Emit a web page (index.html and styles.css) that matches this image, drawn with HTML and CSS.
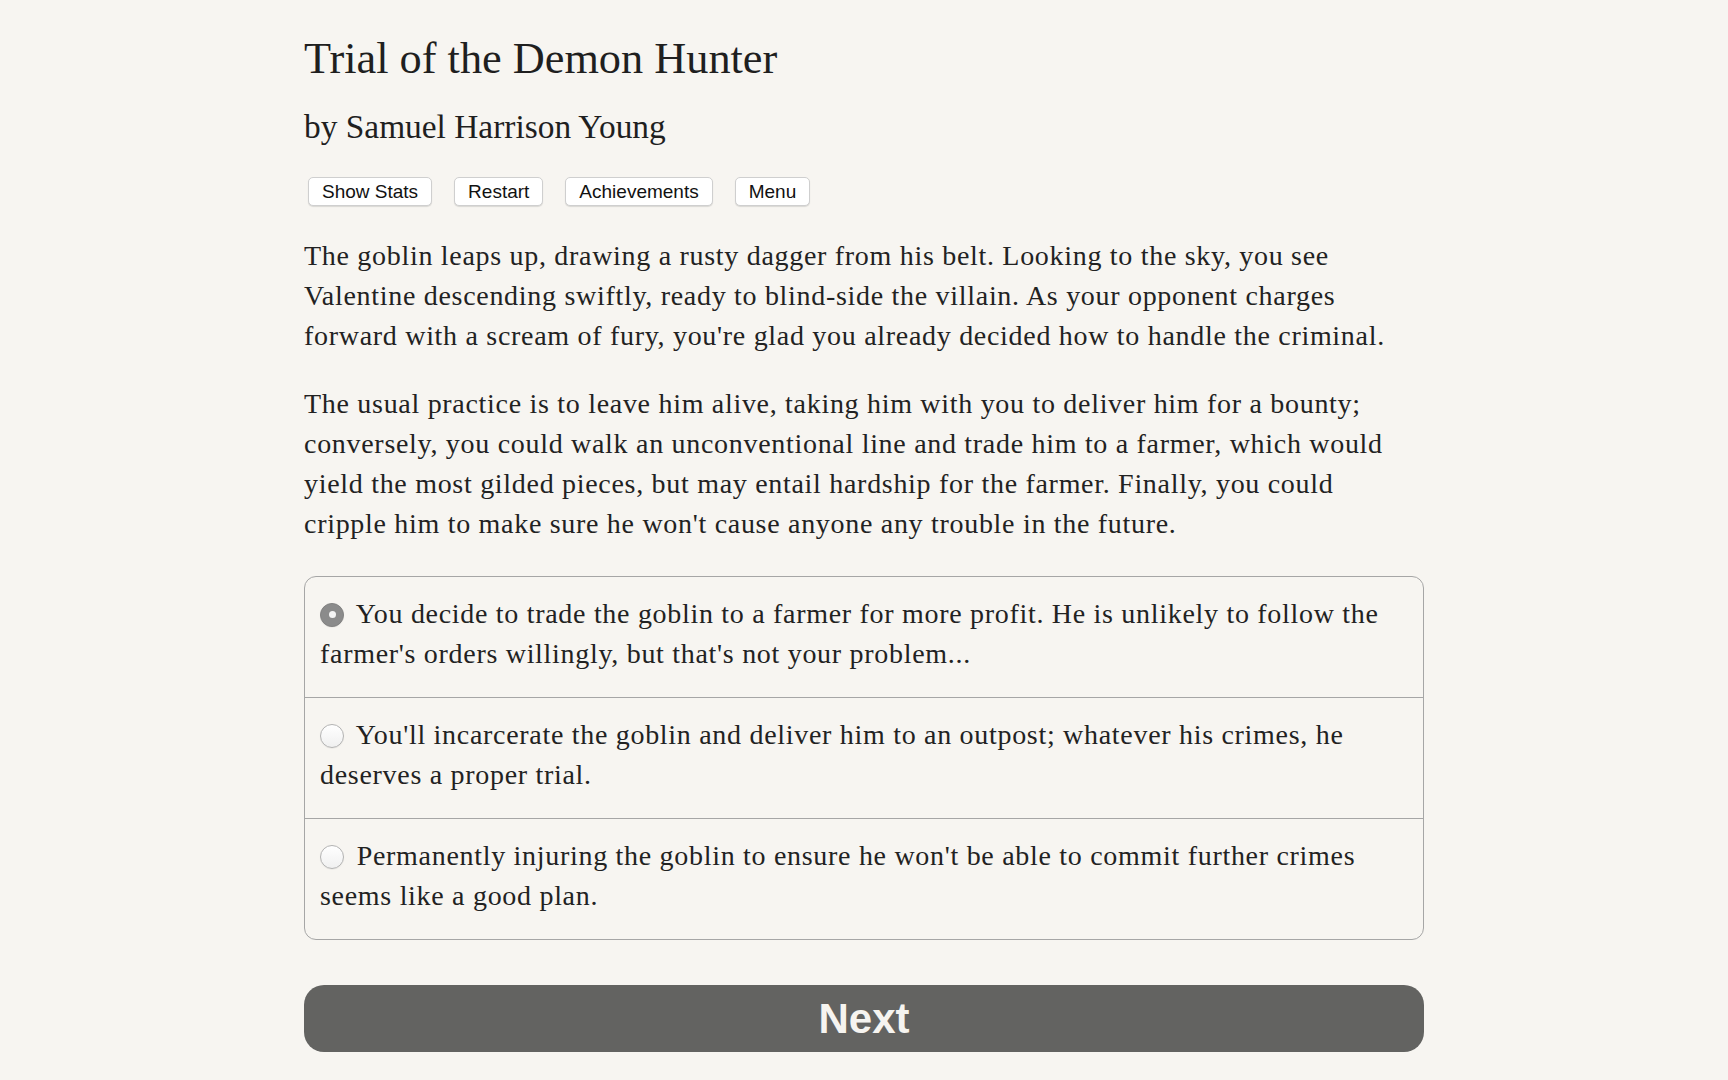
FILE: index.html
```html
<!DOCTYPE html>
<html lang="en">
<head>
<meta charset="utf-8">
<title>Trial of the Demon Hunter</title>
<link rel="stylesheet" href="styles.css">
</head>
<body>
<main class="page">
  <h1 class="title">Trial of the Demon Hunter</h1>
  <h2 class="author">by Samuel Harrison Young</h2>
  <div class="toolbar">
    <button class="tool-btn">Show Stats</button>
    <button class="tool-btn">Restart</button>
    <button class="tool-btn">Achievements</button>
    <button class="tool-btn">Menu</button>
  </div>
  <p class="story">The goblin leaps up, drawing a rusty dagger from his belt. Looking to the sky, you see Valentine descending swiftly, ready to blind-side the villain. As your opponent charges forward with a scream of fury, you're glad you already decided how to handle the criminal.</p>
  <p class="story">The usual practice is to leave him alive, taking him with you to deliver him for a bounty; conversely, you could walk an unconventional line and trade him to a farmer, which would yield the most gilded pieces, but may entail hardship for the farmer. Finally, you could cripple him to make sure he won't cause anyone any trouble in the future.</p>
  <div class="choices">
    <div class="choice"><span class="radio checked"></span> You decide to trade the goblin to a farmer for more profit. He is unlikely to follow the farmer's orders willingly, but that's not your problem...</div>
    <div class="choice"><span class="radio"></span> You'll incarcerate the goblin and deliver him to an outpost; whatever his crimes, he deserves a proper trial.</div>
    <div class="choice"><span class="radio"></span> Permanently injuring the goblin to ensure he won't be able to commit further crimes seems like a good plan.</div>
  </div>
  <button class="next-btn">Next</button>
</main>
</body>
</html>
```
FILE: styles.css
```css
html, body {
  margin: 0;
  padding: 0;
  background: #f7f5f1;
}

body {
  color: #222;
  font-family: "Liberation Serif", "Times New Roman", serif;
}

.page {
  width: 1120px;
  margin: 0 auto;
  padding-top: 33px;
  display: flex;
  flex-direction: column;
}

.title {
  margin: 0;
  font-size: 44.3px;
  line-height: 52px;
  font-weight: normal;
  color: #1f1f1f;
}

.author {
  margin: 22px 0 0;
  font-size: 33.4px;
  line-height: 40px;
  font-weight: normal;
  color: #1f1f1f;
}

.toolbar {
  margin: 30px 0 0;
  padding-left: 4px;
  display: flex;
  gap: 22px;
}

.tool-btn {
  font-family: "Liberation Sans", Arial, sans-serif;
  font-size: 19px;
  line-height: 21px;
  height: 29px;
  padding: 3px 13px;
  color: #111;
  background: #fff;
  border: 1px solid #cfcfcf;
  border-radius: 5px;
  box-shadow: 0 1px 1px rgba(0, 0, 0, 0.12);
}

.story {
  margin: 30px 0 0;
  max-width: 1100px;
  font-size: 28px;
  line-height: 40px;
  letter-spacing: 0.7px;
}

.story + .story {
  margin-top: 28px;
}

.choices {
  margin-top: 32px;
  border: 1px solid #a6a6a6;
  border-radius: 12px;
  display: flex;
  flex-direction: column;
}

.choice {
  padding: 17px 15px 23px;
  font-size: 28px;
  line-height: 40px;
  letter-spacing: 0.7px;
  min-height: 80px;
}

.choice + .choice {
  border-top: 1px solid #a6a6a6;
}

.radio {
  display: inline-block;
  box-sizing: border-box;
  width: 24px;
  height: 24px;
  border-radius: 50%;
  border: 1px solid #b3b3b3;
  background: linear-gradient(#ffffff, #f0f0f0);
  box-shadow: 0 0.5px 1px rgba(0, 0, 0, 0.08);
  vertical-align: middle;
  margin: -4px 5px 0 0;
  position: relative;
}

.radio.checked {
  background: #8b8b8b;
  border-color: #828282;
}

.radio.checked::after {
  content: "";
  position: absolute;
  left: 50%;
  top: 50%;
  width: 7px;
  height: 7px;
  margin: -3.5px 0 0 -3.5px;
  border-radius: 50%;
  background: #f4f4f4;
}

.next-btn {
  margin-top: 45px;
  height: 67px;
  width: 100%;
  border: none;
  border-radius: 20px;
  background: #636361;
  color: #f6f4f0;
  font-family: "Liberation Sans", Arial, sans-serif;
  font-weight: bold;
  font-size: 42px;
  line-height: 67px;
  padding: 0;
}
```
